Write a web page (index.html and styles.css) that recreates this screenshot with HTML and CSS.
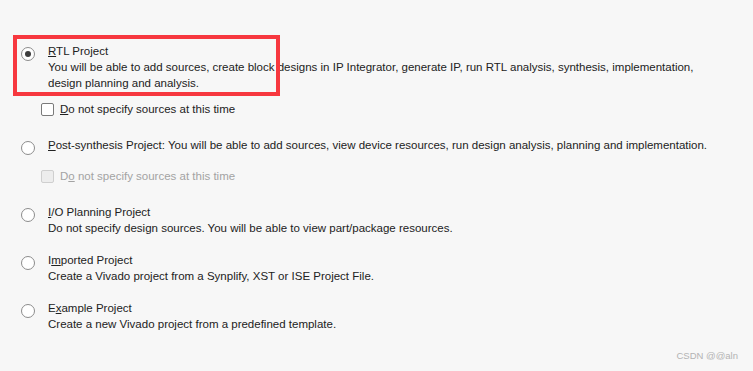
FILE: index.html
```html
<!DOCTYPE html>
<html lang="en">
<head>
  <meta charset="UTF-8">
  <title>New Project - Project Type</title>
  <link rel="stylesheet" href="styles.css">
</head>
<body>
  <div class="page">
    <div class="highlight"></div>

    <div class="option first">
      <span class="radio checked"></span>
      <div class="option-text">
        <div class="title"><u>R</u>TL Project</div>
        <div class="desc">You will be able to add sources, create block designs in IP Integrator, generate IP, run RTL analysis, synthesis, implementation,<br>design planning and analysis.</div>
      </div>
    </div>
    <div class="check-row">
      <span class="checkbox"></span>
      <span><u>D</u>o not specify sources at this time</span>
    </div>

    <div class="option post">
      <span class="radio"></span>
      <div class="option-text">
        <div class="title"><u>P</u>ost-synthesis Project: You will be able to add sources, view device resources, run design analysis, planning and implementation.</div>
      </div>
    </div>
    <div class="check-row disabled">
      <span class="checkbox"></span>
      <span>D<u>o</u> not specify sources at this time</span>
    </div>

    <div class="option io">
      <span class="radio"></span>
      <div class="option-text">
        <div class="title"><u>I</u>/O Planning Project</div>
        <div class="desc">Do not specify design sources. You will be able to view part/package resources.</div>
      </div>
    </div>

    <div class="option">
      <span class="radio"></span>
      <div class="option-text">
        <div class="title">I<u>m</u>ported Project</div>
        <div class="desc">Create a Vivado project from a Synplify, XST or ISE Project File.</div>
      </div>
    </div>

    <div class="option">
      <span class="radio"></span>
      <div class="option-text">
        <div class="title">E<u>x</u>ample Project</div>
        <div class="desc">Create a new Vivado project from a predefined template.</div>
      </div>
    </div>

    <div class="watermark">CSDN @@aln</div>
  </div>
</body>
</html>
```

FILE: styles.css
```css
html, body {
  margin: 0;
  height: 100%;
}

body {
  background: #f7f7f7;
  color: #222;
  font-family: "Liberation Sans", Arial, sans-serif;
  font-size: 11.5px;
  line-height: 16px;
}

.page {
  position: relative;
  height: 371px;
  padding-top: 43px;
  box-sizing: border-box;
}

/* red annotation box drawn over the first option */
.highlight {
  position: absolute;
  left: 13px;
  top: 35px;
  width: 259px;
  height: 53px;
  border: 4px solid #f7383f;
}

.option {
  display: flex;
  align-items: flex-start;
  padding-left: 21px;
  margin-top: 16px;
}

.option.first {
  margin-top: 0;
}

.option.post {
  margin-top: 20px;
}

.option.io {
  margin-top: 20px;
}

.option-text {
  margin-left: 13px;
  white-space: nowrap;
}

.radio {
  flex: none;
  width: 12px;
  height: 12px;
  margin-top: 4px;
  border: 1px solid #8c8c8c;
  border-radius: 50%;
  background: #fff;
  position: relative;
}

.radio.checked::after {
  content: "";
  position: absolute;
  left: 3px;
  top: 3px;
  width: 6px;
  height: 6px;
  border-radius: 50%;
  background: #3d3d3d;
}

.check-row {
  display: flex;
  align-items: center;
  padding-left: 41px;
  margin-top: 10px;
}

.check-row.disabled {
  color: #a3a3a3;
  margin-top: 13px;
}

.checkbox {
  flex: none;
  width: 11px;
  height: 11px;
  margin-right: 6px;
  border: 1px solid #7a7a7a;
  border-radius: 2px;
  background: #fff;
}

.check-row.disabled .checkbox {
  border-color: #cfcfcf;
  background: #ededed;
}

u {
  text-underline-offset: 1px;
}

.watermark {
  position: absolute;
  right: 15px;
  bottom: 7px;
  font-size: 9.5px;
  color: #b3b3b3;
}
```
